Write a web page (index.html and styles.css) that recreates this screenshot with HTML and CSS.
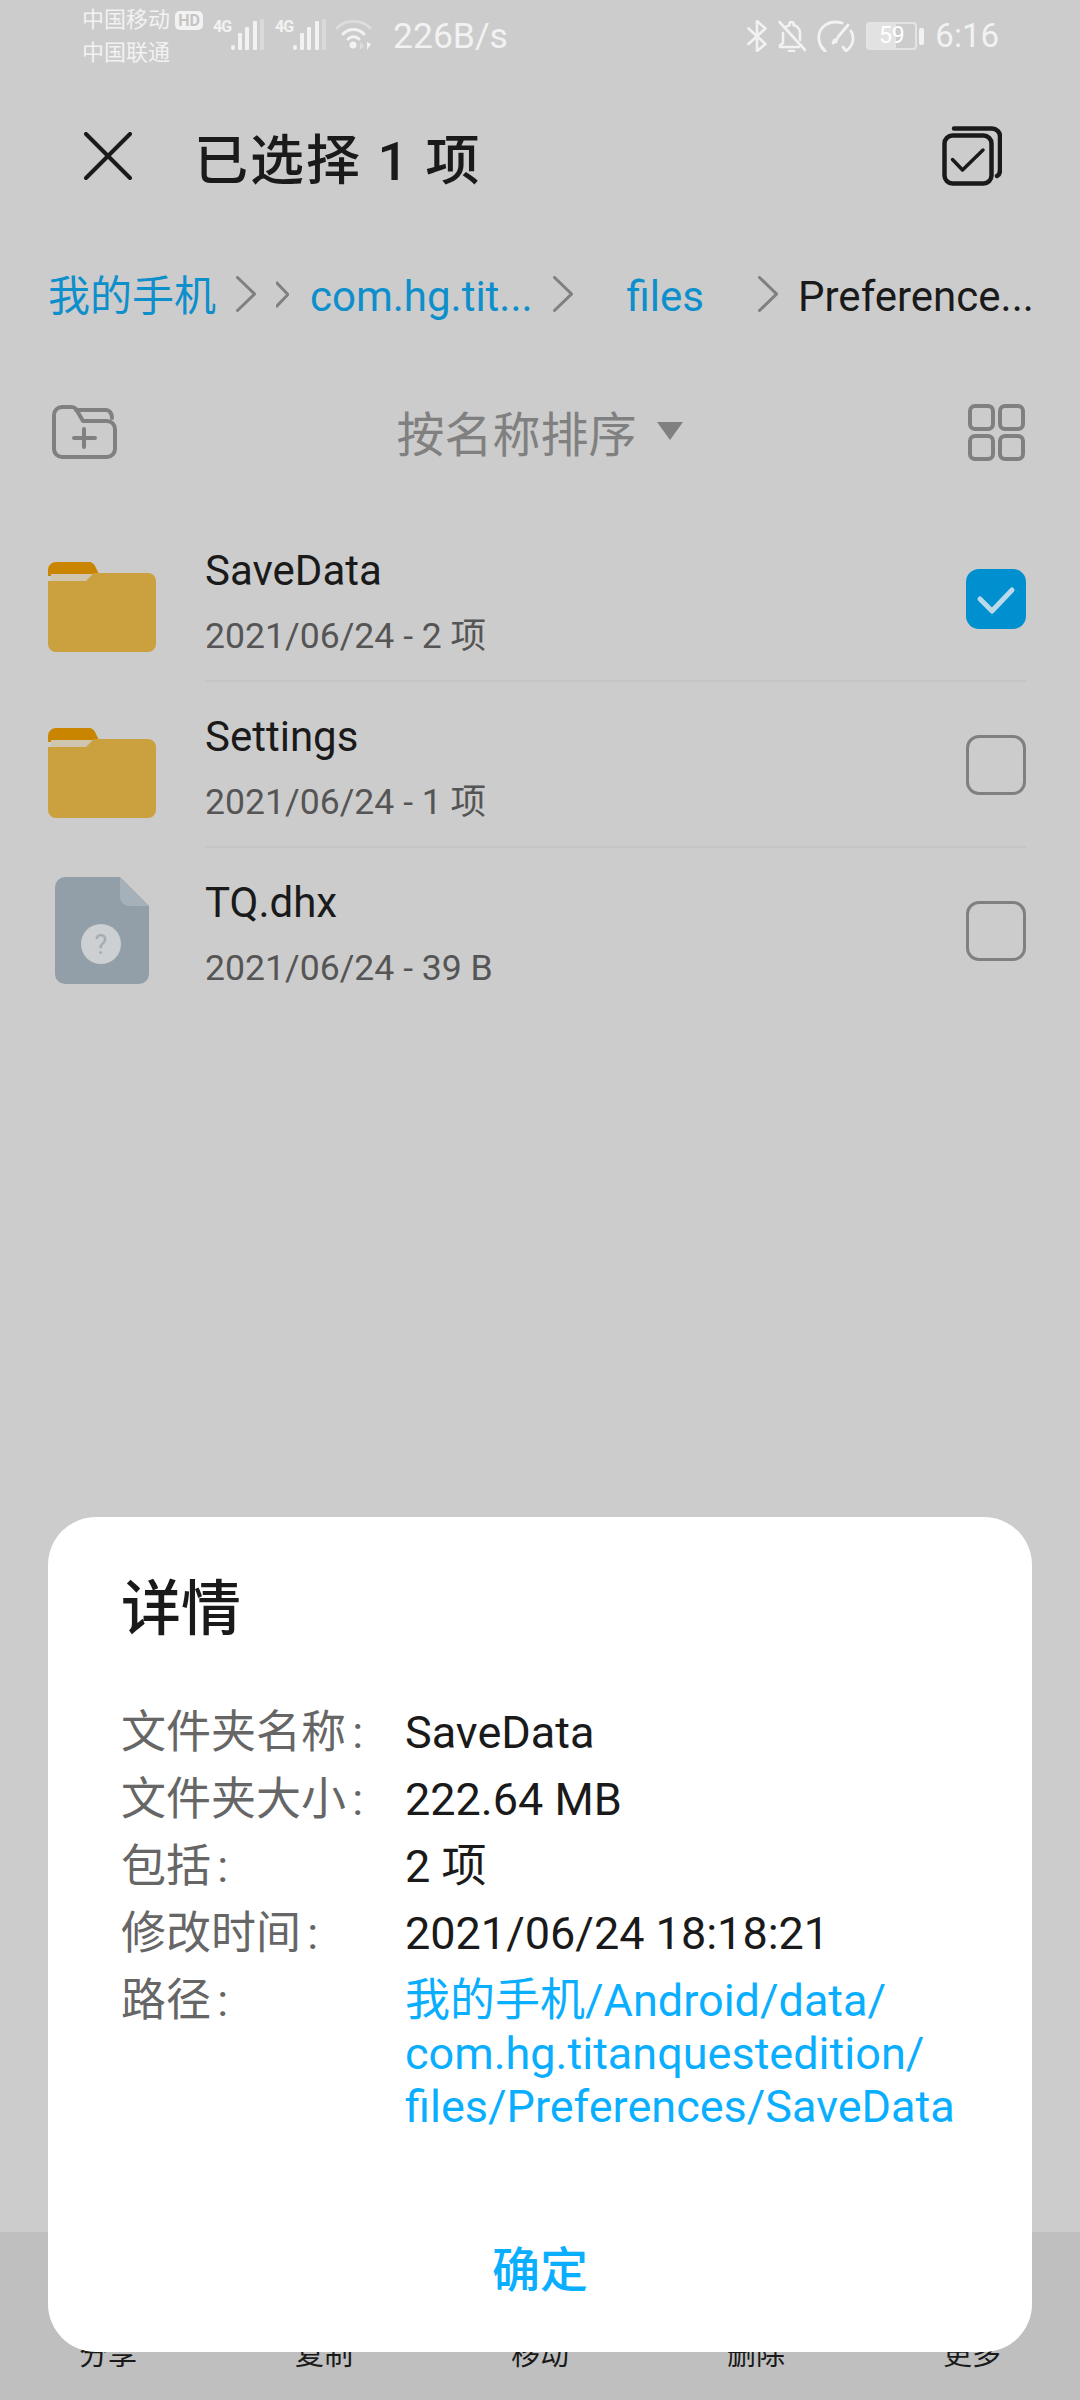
FILE: index.html
```html
<!DOCTYPE html>
<html lang="zh">
<head>
    <meta charset="UTF-8" />
    <title>文件管理</title>
    <link rel="stylesheet" href="styles.css">
</head>
<body>
    <div class="page">
        <div class="status">
            <div class="carrier">
                <div>中国移动</div>
                <div>中国联通</div>
            </div>
            <span class="hd">HD</span>
            <div class="signal">
                <span class="net">4G</span>
                <svg width="33" height="31" viewBox="0 0 33 31"><rect x="0" y="26" width="4" height="5" rx="2" fill="#f2f2f2"/><rect x="7" y="14" width="4" height="17" rx="1" fill="#f2f2f2"/><rect x="14" y="8" width="4" height="23" rx="1" fill="#f2f2f2"/><rect x="22" y="2" width="4" height="29" rx="1" fill="#f2f2f2"/><rect x="29" y="0" width="4" height="31" rx="1" fill="#dadada"/></svg>
            </div>
            <div class="signal signal-2">
                <span class="net">4G</span>
                <svg width="33" height="31" viewBox="0 0 33 31"><rect x="0" y="26" width="4" height="5" rx="2" fill="#f2f2f2"/><rect x="7" y="14" width="4" height="17" rx="1" fill="#f2f2f2"/><rect x="14" y="8" width="4" height="23" rx="1" fill="#f2f2f2"/><rect x="22" y="2" width="4" height="29" rx="1" fill="#f2f2f2"/><rect x="29" y="0" width="4" height="31" rx="1" fill="#dadada"/></svg>
            </div>
            <svg class="wifi" width="37" height="32" viewBox="0 0 37 32" fill="none" stroke-linecap="round"><path d="M2 9C11 0 26 0 35 9" stroke="#dcdcdc" stroke-width="3"/><path d="M8 15C14 9 23 9 29 15" stroke="#f2f2f2" stroke-width="3"/><path d="M13 20C16 17 21 17 24 20" stroke="#f2f2f2" stroke-width="3"/><circle cx="18" cy="26" r="3.5" fill="#f2f2f2"/><path d="M25 23L25 31L29 27Z" fill="#dcdcdc"/><path d="M32 23V31L36 25Z" fill="#f2f2f2"/></svg>
            <span class="speed">226B/s</span>
            <div class="status-right">
                <svg width="20" height="32" viewBox="0 0 20 32" fill="none" stroke="#f2f2f2" stroke-width="2.6" stroke-linecap="round" stroke-linejoin="round"><path d="M1.500 8.500L18.500 24L10 31V1L18.500 8.500L1.500 24"/></svg>
                <svg width="28" height="32" viewBox="0 0 28 32" fill="none" stroke="#f2f2f2" stroke-width="2.600" stroke-linecap="round" stroke-linejoin="round"><path d="M5 13V23L2 25.500V27H21M8 7C9 6 10.500 5.500 11.500 5.200V3.500C11.500 1.500 15.500 1.500 15.500 3.500V5C19 6 22 9 22 13V20"/><path d="M1.500 2L27 30"/><path d="M11 31H16"/></svg>
                <svg width="38" height="32" viewBox="0 0 38 32" fill="none" stroke="#f2f2f2" stroke-width="2.800" stroke-linecap="round" stroke-linejoin="round"><path d="M8 31C1 25 -1 13 7 6C12 2 18 1 25 3"/><path d="M5 27L8 31"/><path d="M34 11C38 18 36 26 29 31L26 27"/><path d="M31 5L21 17"/><circle cx="18" cy="21" r="2.500" fill="#f2f2f2" stroke="none"/><path d="M20 19L16 23" stroke-width="3"/></svg>
                <div class="battery">
                    <div class="battery-body"><span class="battery-num">59</span></div>
                    <div class="battery-nub"></div>
                </div>
                <span class="clock">6:16</span>
            </div>
        </div>

        <div class="appbar">
            <svg class="close" width="48" height="48" viewBox="0 0 48 48" fill="none" stroke="#1a1a1a" stroke-width="4" stroke-linecap="round"><path d="M2 2L46 46M46 2L2 46"/></svg>
            <h1>已选择 1 项</h1>
            <svg class="select-all" width="60" height="60" viewBox="0 0 60 60" fill="none" stroke="#1a1a1a" stroke-linecap="round" stroke-linejoin="round"><rect x="2.500" y="9.500" width="47" height="48" rx="8" stroke-width="4.500"/><path d="M12 2.500H50A8 8 0 0 1 58 10.500V44C58 47 57 49 55 50" stroke-width="4.500"/><path d="M10.500 33.500L20.500 44L41 24" stroke-width="3.500"/></svg>
        </div>

        <div class="crumbs">
            <span class="crumb">我的手机</span>
            <svg class="chev" width="20" height="36" viewBox="0 0 20 36" fill="none" stroke="#808080" stroke-width="3" stroke-linecap="round"><path d="M1.500 1.500L18.500 18L1.500 34.500"/></svg>
            <svg class="chev-small" width="13" height="27" viewBox="0 0 13 27" fill="none" stroke="#808080" stroke-width="3"><path d="M0 1L12 13.500L0 26"/></svg>
            <span class="crumb">com.hg.tit...</span>
            <svg class="chev" width="20" height="36" viewBox="0 0 20 36" fill="none" stroke="#808080" stroke-width="3" stroke-linecap="round"><path d="M1.500 1.500L18.500 18L1.500 34.500"/></svg>
            <span class="crumb crumb-files">files</span>
            <svg class="chev" width="20" height="36" viewBox="0 0 20 36" fill="none" stroke="#808080" stroke-width="3" stroke-linecap="round"><path d="M1.500 1.500L18.500 18L1.500 34.500"/></svg>
            <span class="crumb crumb-current">Preference...</span>
        </div>

        <div class="sortbar">
            <svg width="65" height="54" viewBox="0 0 65 54" fill="none" stroke="#808080" stroke-width="4" stroke-linecap="round" stroke-linejoin="round"><path d="M2 10A8 8 0 0 1 10 2H20C22 2 23 3 24 4L31 16H55A8 8 0 0 1 63 24V44A8 8 0 0 1 55 52H10A8 8 0 0 1 2 44Z"/><path d="M24 5H54C57 5 60 8 60 13"/><path d="M32 24V42M22 33H43" stroke-width="4"/></svg>
            <div class="sort">
                <span>按名称排序</span>
                <span class="sort-arrow"></span>
            </div>
            <svg width="57" height="57" viewBox="0 0 57 57" fill="none" stroke="#808080" stroke-width="4"><rect x="2" y="2" width="23" height="23" rx="5"/><rect x="32" y="2" width="23" height="23" rx="5"/><rect x="2" y="32" width="23" height="23" rx="5"/><rect x="32" y="32" width="23" height="23" rx="5"/></svg>
        </div>

        <div class="list">
            <div class="row">
                <div class="row-icon">
                    <svg width="108" height="107" viewBox="0 0 108 107"><g transform="translate(0 17)"><path d="M0 30V8A8 8 0 0 1 8 0H41C44 0 46 2 47 4L52 14H0Z" fill="#c98500"/><path d="M3 12H50L44 19H3Z" fill="#cfc5ae"/><path d="M0 19H38L46 11H100A8 8 0 0 1 108 19V82A8 8 0 0 1 100 90H8A8 8 0 0 1 0 82Z" fill="#cba03f"/></g></svg>
                </div>
                <div class="row-info">
                    <div class="name">SaveData</div>
                    <div class="meta">2021/06/24 - 2 项</div>
                </div>
                <div class="check check-on">
                    <svg width="60" height="60" viewBox="0 0 60 60" fill="none" stroke="#bcd9ea" stroke-width="5" stroke-linecap="round" stroke-linejoin="round"><path d="M14 30L26 42L46 21"/></svg>
                </div>
            </div>
            <div class="row">
                <div class="row-icon">
                    <svg width="108" height="107" viewBox="0 0 108 107"><g transform="translate(0 17)"><path d="M0 30V8A8 8 0 0 1 8 0H41C44 0 46 2 47 4L52 14H0Z" fill="#c98500"/><path d="M3 12H50L44 19H3Z" fill="#cfc5ae"/><path d="M0 19H38L46 11H100A8 8 0 0 1 108 19V82A8 8 0 0 1 100 90H8A8 8 0 0 1 0 82Z" fill="#cba03f"/></g></svg>
                </div>
                <div class="row-info">
                    <div class="name">Settings</div>
                    <div class="meta">2021/06/24 - 1 项</div>
                </div>
                <div class="check"></div>
            </div>
            <div class="row row-last">
                <div class="row-icon">
                    <svg width="94" height="107" viewBox="0 0 94 107"><path d="M10 0H65L94 29V97A10 10 0 0 1 84 107H10A10 10 0 0 1 0 97V10A10 10 0 0 1 10 0Z" fill="#929fa9"/><path d="M65 0L94 29H74A9 9 0 0 1 65 20Z" fill="#a5b0b9"/><circle cx="46" cy="67" r="20" fill="#ccd0d2"/><text x="46" y="77" font-size="27" text-anchor="middle" fill="#a3adb4" font-family="Roboto, sans-serif">?</text></svg>
                </div>
                <div class="row-info">
                    <div class="name">TQ.dhx</div>
                    <div class="meta">2021/06/24 - 39 B</div>
                </div>
                <div class="check"></div>
            </div>
        </div>

        <div class="actions">
            <span>分享</span>
            <span>复制</span>
            <span>移动</span>
            <span>删除</span>
            <span>更多</span>
        </div>

        <div class="dialog">
            <h2>详情</h2>
            <div class="details">
                <div class="label">文件夹名称 :</div>
                <div class="value">SaveData</div>
                <div class="label">文件夹大小 :</div>
                <div class="value">222.64 MB</div>
                <div class="label">包括 :</div>
                <div class="value">2 项</div>
                <div class="label">修改时间 :</div>
                <div class="value">2021/06/24 18:18:21</div>
                <div class="label">路径 :</div>
                <div class="value value-path">我的手机/Android/data/<br>com.hg.titanquestedition/<br>files/Preferences/SaveData</div>
            </div>
            <div class="dialog-btn">确定</div>
        </div>
    </div>
</body>
</html>
```

FILE: styles.css
```css
* {
    box-sizing: border-box;
}

body {
    margin: 0;
    background-color: #cccccc;
    font-family: Roboto, "Noto Sans CJK SC", sans-serif;
    color: #1a1a1a;
}

.page {
    position: relative;
    width: 1080px;
    height: 2400px;
    overflow: hidden;
    display: flex;
    flex-direction: column;
}

/* status bar */
.status {
    height: 72px;
    flex: none;
    display: flex;
    align-items: center;
    padding: 0 81px 0 82px;
    color: #f2f2f2;
}

.carrier {
    width: 93px;
    font-size: 22px;
    line-height: 33px;
}

.hd {
    align-self: flex-start;
    margin-top: 11px;
    width: 28px;
    height: 19px;
    border-radius: 5px;
    background-color: #f2f2f2;
    color: #c4c4c4;
    font-size: 16px;
    line-height: 19px;
    font-weight: 700;
    text-align: center;
}

.signal {
    display: flex;
    align-items: flex-start;
    height: 31px;
    margin-left: 10px;
    margin-top: -4px;
}

.signal-2 {
    margin-left: 11px;
}

.net {
    width: 18px;
    font-size: 16px;
    line-height: 16px;
    font-weight: 700;
    letter-spacing: -1px;
}

.wifi {
    margin-left: 9px;
    margin-top: -2px;
}

.speed {
    margin-left: 21px;
    font-size: 35.500px;
    line-height: 40px;
    margin-top: -1px;
}

.status-right {
    margin-left: auto;
    display: flex;
    align-items: center;
    gap: 11px;
}

.battery {
    display: flex;
    align-items: center;
}

.battery-body {
    width: 51px;
    height: 28px;
    border: 2px solid #e4e4e4;
    border-radius: 4px;
    background: linear-gradient(to right, #e2e2e2 59%, transparent 59%);
    text-align: center;
}

.battery-num {
    display: block;
    font-size: 23px;
    line-height: 23px;
    color: #fff;
}

.battery-nub {
    width: 5px;
    height: 17px;
    margin-left: 2px;
    border-radius: 2px;
    background-color: #f2f2f2;
}

.clock {
    font-size: 33px;
    line-height: 40px;
}

/* title */
.appbar {
    height: 168px;
    flex: none;
    display: flex;
    align-items: center;
    padding: 0 78px 0 84px;
}

.appbar h1 {
    margin: 0 0 0 62px;
    font-size: 54px;
    font-weight: 500;
    letter-spacing: 2px;
    flex: 1;
}

/* path */
.crumbs {
    height: 108px;
    flex: none;
    display: flex;
    align-items: center;
    gap: 20px;
    padding-left: 48px;
}

.crumb {
    margin-top: 5px;
    font-size: 42px;
    line-height: 50px;
    color: #0d8fcc;
    white-space: nowrap;
}

.crumb-files {
    margin-left: 34px;
    margin-right: 34px;
}

.crumb-current {
    color: #1a1a1a;
}

.chev-small {
    margin-right: 1px;
}

/* sort row */
.sortbar {
    height: 168px;
    flex: none;
    display: flex;
    align-items: center;
    justify-content: space-between;
    padding: 0 55px 0 52px;
}

.sort {
    display: flex;
    align-items: center;
    gap: 20px;
    margin: -2px 0 0 -6px;
    font-size: 48px;
    color: #808080;
}

.sort-arrow {
    width: 0;
    height: 0;
    border-left: 13px solid transparent;
    border-right: 13px solid transparent;
    border-top: 18px solid #808080;
}

/* file list */
.list {
    flex: 1;
}

.row {
    height: 166px;
    display: flex;
    padding: 0 54px 0 48px;
}

.row-icon {
    width: 108px;
    flex: none;
    display: flex;
    align-items: center;
    justify-content: center;
    padding-bottom: 2px;
}

.row-info {
    flex: 1;
    margin-left: 49px;
    padding-top: 27px;
    border-bottom: 2px solid #c4c4c4;
}

.row-last .row-info {
    border-bottom: none;
}

.name {
    font-size: 42px;
    line-height: 56px;
}

.meta {
    margin-top: 12px;
    font-size: 35.600px;
    line-height: 50px;
    color: #555555;
}

.check {
    align-self: center;
    width: 60px;
    height: 60px;
    flex: none;
    margin-left: -60px;
    border: 3px solid #808080;
    border-radius: 13px;
}

.check-on {
    border: none;
    background-color: #0090cf;
}

/* bottom actions, mostly under the dialog */
.actions {
    height: 168px;
    flex: none;
    display: grid;
    grid-template-columns: repeat(5, 216px);
    align-items: end;
    padding-bottom: 25px;
    background-color: #bfbfbf;
    font-size: 29px;
    line-height: 40px;
    text-align: center;
}

/* dialog */
.dialog {
    position: absolute;
    left: 48px;
    top: 1517px;
    width: 984px;
    height: 835px;
    padding: 53px 73px 0;
    border-radius: 48px;
    background-color: #fff;
    display: flex;
    flex-direction: column;
}

.dialog h2 {
    margin: 0;
    font-size: 60px;
    line-height: 80px;
    font-weight: 500;
}

.details {
    margin-top: 56px;
    display: grid;
    grid-template-columns: 284px 1fr;
    row-gap: 14px;
    font-size: 45px;
    line-height: 53px;
}

.label {
    color: #666666;
    white-space: nowrap;
    word-spacing: -5px;
}

.value-path {
    color: #0aaeff;
}

.dialog-btn {
    margin: auto -73px 0;
    height: 168px;
    font-size: 48px;
    font-weight: 500;
    line-height: 174px;
    text-align: center;
    color: #0aaeff;
}
```
